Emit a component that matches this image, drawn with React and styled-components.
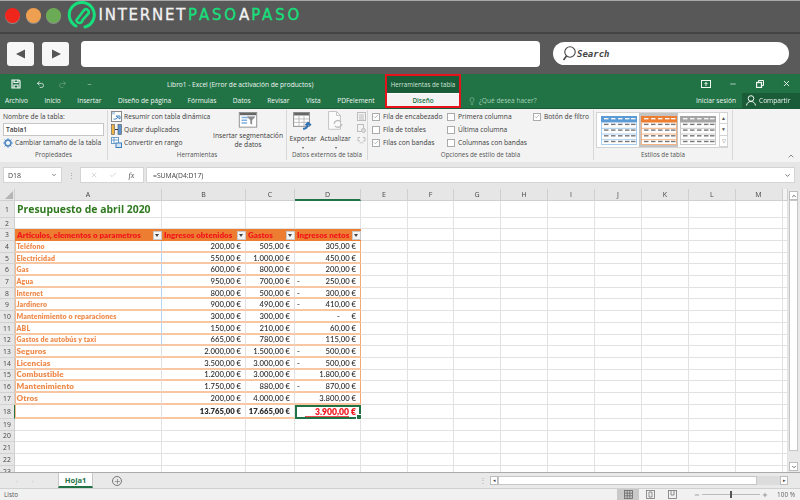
import React from 'react'
import styled, { createGlobalStyle } from 'styled-components'
import { Check, X, Undo2, Redo2, Minus, Plus, Lightbulb, ChevronUp, ChevronDown } from 'lucide-react'

const GlobalStyle = createGlobalStyle`
    html, body { margin: 0; padding: 0; background: #5a5a5a; }
    * { box-sizing: border-box; }
`

const Page = styled.div`
    width: 800px;
    height: 500px;
    overflow: hidden;
    display: flex;
    flex-direction: column;
    font-family: "Open Sans", "Liberation Sans", sans-serif;
    filter: blur(0.3px);
`

/* browser chrome */
const BrowserTop = styled.div`
    height: 34px;
    flex: none;
    display: flex;
    align-items: center;
    background: #585858;
    border-top: 1px solid #a8a8a8;
    border-bottom: 2px solid #444;
    padding: 0 0 3px 5px;
`
const Light = styled.span`
    width: 15px;
    height: 15px;
    border-radius: 50%;
    margin-right: 5.5px;
    background: ${p => p.$color};
    box-shadow: 0 1px 0 #8c8c8c;
`
const Brand = styled.div`
    margin-left: 2px;
    display: flex;
    align-items: center;
    font-family: "DejaVu Sans", sans-serif;
    font-size: 15px;
    letter-spacing: 1.75px;
    color: #f2f2f2;
    -webkit-text-stroke: 0.3px currentColor;
`
const BrandGreen = styled.span`
    color: #16e07c;
    letter-spacing: 2.8px;
    margin-left: 1px;
`
const BrandWhite = styled.span`
    letter-spacing: 1px;
`
const Toolbar = styled.div`
    height: 40px;
    flex: none;
    display: flex;
    align-items: center;
    background: #5a5a5a;
    padding: 0 11px 1px 7px;
`
const NavButton = styled.div`
    width: 27px;
    height: 24px;
    margin-right: 8px;
    background: #f7f7f7;
    border-radius: 3px;
    display: flex;
    align-items: center;
    justify-content: center;
`
const UrlBox = styled.div`
    width: 459px;
    height: 26px;
    margin-left: 4px;
    background: #fff;
    border-radius: 4px;
`
const SearchBox = styled.div`
    width: 236px;
    height: 23px;
    margin-left: auto;
    background: #fff;
    border-radius: 12px;
    display: flex;
    align-items: center;
    gap: 1px;
    padding-left: 9px;
    font-family: "DejaVu Sans Mono", monospace;
    font-style: italic;
    font-weight: bold;
    font-size: 9px;
    color: #444;
`

/* excel title area */
const TitleArea = styled.div`
    height: 34px;
    flex: none;
    display: flex;
    background: #217346;
    color: #f0f6f2;
`
const TitleLeft = styled.div`
    width: 385px;
    flex: none;
    display: flex;
    flex-direction: column;
`
const TitleRight = styled.div`
    flex: 1;
    display: flex;
    flex-direction: column;
`
const TitleRow = styled.div`
    height: 19px;
    display: flex;
    align-items: center;
    padding-top: 1px;
`
const QuickTool = styled.span`
    display: flex;
    align-items: center;
    margin-left: ${p => p.$left}px;
    opacity: ${p => p.$off ? 0.35 : 1};
`
const WindowTitle = styled.span`
    margin-left: 75px;
    font-size: 6.6px;
    white-space: nowrap;
`
const TabRow = styled.div`
    height: 15px;
    display: flex;
    align-items: center;
    font-size: 6.6px;
    gap: 16.5px;
    padding-left: 5px;
    white-space: nowrap;
`
const ContextBox = styled.div`
    width: 76px;
    flex: none;
    border: 2px solid #e8121c;
    border-bottom-width: 2px;
    display: flex;
    flex-direction: column;
    background: #1a5c38;
`
const ContextTitle = styled.div`
    flex: 1;
    display: flex;
    align-items: center;
    justify-content: center;
    font-size: 6.2px;
    white-space: nowrap;
    color: #cfe3d7;
`
const ContextTab = styled.div`
    height: 13px;
    background: #f3f3f3;
    border-top: 1px solid #fff;
    color: #217346;
    font-size: 6.4px;
    font-weight: 600;
    display: flex;
    align-items: center;
    justify-content: center;
`
const WindowControls = styled.div`
    height: 19px;
    display: flex;
    align-items: center;
    justify-content: flex-end;
    color: #f4f8f5;
`
const WindowButton = styled.span`
    width: 27px;
    display: flex;
    justify-content: center;
`
const TellRow = styled.div`
    height: 15px;
    display: flex;
    align-items: center;
    font-size: 6.6px;
    white-space: nowrap;
`
const TellMe = styled.span`
    display: flex;
    align-items: center;
    gap: 3px;
    margin-left: 7px;
    color: #a6d2b6;
`
const SignIn = styled.span`
    margin-left: auto;
    margin-right: 6px;
`
const Share = styled.span`
    width: 58px;
    height: 100%;
    background: #1a5c38;
    display: flex;
    align-items: center;
    gap: 3px;
    padding-left: 4px;
`

/* ribbon */
const Ribbon = styled.div`
    height: 54px;
    flex: none;
    display: flex;
    background: #f3f3f3;
    border-top: 1px solid #1a5c38;
    color: #3c3c3c;
    font-size: 6.7px;
    position: relative;
`
const Group = styled.div`
    width: ${p => p.$width}px;
    flex: none;
    display: flex;
    flex-direction: column;
    border-right: 1px solid #d8d8d8;
    margin: 1px 0 2px;
`
const GroupBody = styled.div`
    flex: 1;
    display: flex;
    padding: ${p => p.$pad || '0 0 0 3px'};
    gap: ${p => p.$gap || 0}px;
    min-height: 0;
`
const GroupLabel = styled.div`
    height: 11px;
    flex: none;
    text-align: center;
    font-size: 6.3px;
    color: #555;
    line-height: 11px;
`
const Stack = styled.div`
    display: flex;
    flex-direction: column;
    width: ${p => p.$width ? p.$width + 'px' : 'auto'};
    flex: ${p => p.$width ? 'none' : '1'};
`
const Line = styled.div`
    height: 13.5px;
    display: flex;
    align-items: center;
    gap: 2px;
    white-space: nowrap;
`
const NameInput = styled.div`
    width: 101px;
    height: 14px;
    border: 1px solid #c6c6c6;
    background: #fff;
    font-weight: 600;
    font-size: 6.6px;
    padding-left: 2px;
    display: flex;
    align-items: center;
`
const BigButton = styled.div`
    width: ${p => p.$width}px;
    flex: none;
    display: flex;
    flex-direction: column;
    align-items: center;
    text-align: center;
    line-height: 9.2px;
    padding-top: ${p => p.$top || 2}px;
`
const BigLabel = styled.div`
    margin-top: 3px;
    white-space: nowrap;
`
const Caret = styled.span`
    width: 0;
    height: 0;
    margin-top: 4px;
    border-left: 1.5px solid transparent;
    border-right: 1.5px solid transparent;
    border-top: 2px solid #555;
`
const SmallIcons = styled.div`
    display: flex;
    flex-direction: column;
    gap: 3px;
    padding-top: 2px;
    margin-left: 2px;
`
const CheckBox = styled.span`
    width: 8px;
    height: 8px;
    flex: none;
    background: #fff;
    border: 1px solid #ababab;
    margin-right: 1px;
    display: flex;
    align-items: center;
    justify-content: center;
    color: #555;
`
const Gallery = styled.div`
    margin: 2px 0 0 2px;
    width: 132px;
    height: 36px;
    background: #fff;
    border: 1px solid #d4d4d4;
    display: flex;
    align-items: center;
    padding-left: 2px;
`
const Thumb = styled.div`
    width: 41px;
    height: 100%;
    display: flex;
    align-items: center;
    justify-content: center;
    background: ${p => p.$active ? '#c4c4c4' : 'transparent'};
`
const GalleryArrows = styled.div`
    margin-left: 1px;
    width: 8px;
    height: 100%;
    display: flex;
    flex-direction: column;
    border-left: 1px solid #d4d4d4;
    color: #555;
`
const GalleryArrow = styled.div`
    flex: 1;
    display: flex;
    align-items: center;
    justify-content: center;
    border-bottom: 1px solid #d4d4d4;
    font-size: 5px;
`
const CollapseButton = styled.span`
    position: absolute;
    right: 5px;
    bottom: 2px;
    color: #555;
    display: flex;
`

/* formula bar */
const FormulaBar = styled.div`
    height: 27px;
    flex: none;
    display: flex;
    align-items: flex-start;
    background: #e6e6e6;
    padding: 5px 5px 0 3px;
    font-size: 7px;
    color: #444;
`
const NameBox = styled.div`
    width: 59px;
    height: 16px;
    background: #fff;
    border: 1px solid #d4d4d4;
    display: flex;
    align-items: center;
    justify-content: space-between;
    padding: 0 4px;
`
const Grip = styled.span`
    width: 18px;
    height: 16px;
    display: flex;
    align-items: center;
    justify-content: center;
    color: #9a9a9a;
    font-size: 7px;
`
const FxBox = styled.div`
    width: 64px;
    height: 16px;
    background: #fff;
    border: 1px solid #d4d4d4;
    display: flex;
    align-items: center;
    justify-content: space-around;
    padding: 0 3px;
    color: #b0b0b0;
`
const FxGlyph = styled.span`
    font-family: "Liberation Serif", serif;
    font-style: italic;
    font-size: 8px;
    color: #555;
`
const FormulaInput = styled.div`
    flex: 1;
    height: 16px;
    margin-left: 2px;
    background: #fff;
    border: 1px solid #d4d4d4;
    display: flex;
    align-items: center;
    justify-content: space-between;
    padding: 0 3px 0 6px;
    font-size: 6.8px;
`

/* sheet */
const SheetArea = styled.div`
    height: 283px;
    flex: none;
    display: flex;
    background: #fff;
    overflow: hidden;
`
const SheetGrid = styled.div`
    width: 788px;
    height: 283px;
    flex: none;
    display: grid;
    grid-template-columns: 15px 147px 84px 49px 66px 47px 46px 47px 47px 47px 47px 47px 46.5px 47px 5.5px;
    grid-template-rows: 12px 17px 11px 12px repeat(14, 11.7px) 14.3px repeat(5, 11.7px);
    font-family: Lato, "Liberation Sans", sans-serif;
`
const ColHead = styled.div`
    display: flex;
    align-items: center;
    justify-content: center;
    font-family: "Open Sans", sans-serif;
    font-size: 7px;
    color: #444;
    background: ${p => p.$empty ? '#f3f3f3' : '#e6e6e6'};
    border-right: 1px solid #cfcfcf;
    border-bottom: ${p => p.$active ? '2px solid #217346' : '1px solid #cfcfcf'};
`
const Corner = styled(ColHead)`
    justify-content: flex-end;
    align-items: flex-end;
    padding: 0 1px 1px 0;
`
const RowHead = styled.div`
    display: flex;
    align-items: center;
    justify-content: center;
    font-family: "Open Sans", sans-serif;
    font-size: 6.8px;
    color: #444;
    background: #e6e6e6;
    border-bottom: 1px solid #d2d2d2;
    border-right: ${p => p.$active ? '1px solid #217346' : '1px solid #cfcfcf'};
`
const Cell = styled.div`
    display: flex;
    align-items: center;
    justify-content: ${p => p.$right ? 'flex-end' : 'flex-start'};
    padding: 0 ${p => p.$right ? '4px' : '2px'} 0 ${p => p.$right ? '2px' : '1.5px'};
    white-space: pre;
    overflow: visible;
    font-size: 7.7px;
    color: #2a2a2a;
    border-right: 1px solid ${p => p.$edge || '#e2e2e2'};
    border-bottom: ${p => p.$rule ? '2px solid #f8c6a3' : '1px solid #e2e2e2'};
    font-weight: ${p => p.$bold ? 800 : 500};
`
const TitleCell = styled(Cell)`
    font-family: "Open Sans", sans-serif;
    font-size: 10.4px;
    font-weight: 700;
    color: #2f7a1f;
    padding-left: 2px;
`
const HeadCell = styled.div`
    display: flex;
    align-items: center;
    justify-content: space-between;
    background: #ed7d31;
    color: #f1161c;
    font-size: 8px;
    font-weight: 800;
    white-space: nowrap;
    padding: 0 0.5px 0 2px;
`
const FilterButton = styled.span`
    width: 9px;
    height: 9px;
    flex: none;
    background: #f4f4f4;
    border: 1px solid #c8c8c8;
    display: flex;
    align-items: center;
    justify-content: center;
    &::after {
        content: '';
        border-left: 2px solid transparent;
        border-right: 2px solid transparent;
        border-top: 3px solid #444;
    }
`
const NameCell = styled(Cell)`
    color: #ef8a4a;
    font-weight: 800;
    font-size: ${p => p.$large ? 8.1 : 7}px;
    box-shadow: inset 1px 0 0 #f6b98f;
    letter-spacing: ${p => p.$large ? 0.1 : 0.12}px;
`
const Dash = styled.span`
    margin-right: auto;
`
const SelectedCell = styled(Cell)`
    position: relative;
    border: 2px solid #217346;
    color: #f1141c;
    font-size: 8.6px;
    font-weight: 800;
    padding-right: 3px;
    &::before {
        content: '';
        position: absolute;
        left: 8px;
        width: 44px;
        bottom: 0;
        height: 1px;
        background: #ef4a50;
    }
    &::after {
        content: '';
        position: absolute;
        right: -3px;
        bottom: -3px;
        width: 4px;
        height: 4px;
        background: #217346;
        border: 1px solid #fff;
    }
`
const VScroll = styled.div`
    flex: 1;
    display: flex;
    flex-direction: column;
    background: #e8e8e8;
    padding: 2px 2px 1px 1px;
`
const ScrollStep = styled.div`
    height: 9px;
    flex: none;
    background: #fff;
    border: 1px solid #bdbdbd;
    color: #444;
    display: flex;
    align-items: center;
    justify-content: center;
    margin-top: ${p => p.$auto ? 'auto' : 0};
`
const VThumb = styled.div`
    height: 251px;
    flex: none;
    background: #fff;
    border: 1px solid #c6c6c6;
`

/* tab bar and status bar */
const TabBar = styled.div`
    height: 17px;
    flex: none;
    display: flex;
    align-items: flex-start;
    background: #e9e9e9;
    border-top: 1px solid #ababab;
    border-bottom: 1px solid #d0d0d0;
    position: relative;
`
const TabNav = styled.span`
    width: 16px;
    margin-top: 5px;
    margin-left: ${p => p.$left || 0}px;
    color: #bdbdbd;
    font-size: 6px;
    line-height: 6px;
    text-align: center;
`
const SheetTab = styled.div`
    width: 35px;
    height: 15px;
    margin-left: 17px;
    background: #fff;
    color: #217346;
    font-size: 7.5px;
    font-weight: 700;
    border-bottom: 2px solid #217346;
    border-left: 1px solid #c8c8c8;
    border-right: 1px solid #c8c8c8;
    display: flex;
    align-items: center;
    justify-content: center;
`
const AddSheet = styled.span`
    width: 10px;
    height: 10px;
    margin: 3px 0 0 19px;
    border: 1px solid #777;
    border-radius: 50%;
    color: #666;
    display: flex;
    align-items: center;
    justify-content: center;
`
const HScroll = styled.div`
    position: absolute;
    left: 490px;
    top: 3px;
    width: 298px;
    height: 9px;
    display: flex;
    background: #dcdcdc;
`
const HStep = styled.span`
    width: 8px;
    flex: none;
    background: #fff;
    border: 1px solid #bdbdbd;
    color: #444;
    font-size: 5px;
    line-height: 7px;
    text-align: center;
    margin-left: ${p => p.$auto ? 'auto' : 0};
`
const HThumb = styled.span`
    width: 259px;
    flex: none;
    background: #fff;
    border: 1px solid #c6c6c6;
`
const HGrip = styled.span`
    position: absolute;
    left: 479px;
    top: 2px;
    color: #aaa;
    font-size: 8px;
    line-height: 10px;
`
const StatusBar = styled.div`
    flex: 1;
    display: flex;
    align-items: center;
    background: #f1f1f1;
    color: #555;
    font-size: 6.4px;
    padding-left: 4px;
`
const StatusRight = styled.div`
    margin-left: auto;
    height: 100%;
    display: flex;
    align-items: center;
    padding-right: 5px;
`
const ViewButton = styled.span`
    width: 22px;
    height: 100%;
    display: flex;
    align-items: center;
    justify-content: center;
    background: ${p => p.$active ? '#c9c9c9' : 'transparent'};
`
const ZoomSlider = styled.div`
    margin-left: 11px;
    display: flex;
    align-items: center;
    color: #555;
`
const ZoomTrack = styled.div`
    width: 58px;
    height: 1px;
    margin: 0 2px;
    background: #bbb;
    display: flex;
    justify-content: center;
    align-items: center;
`
const ZoomThumb = styled.span`
    width: 2px;
    height: 7px;
    flex: none;
    background: #555;
`
const ZoomValue = styled.span`
    margin-left: 9px;
    color: #666;
`

const Logo = () => (
    <svg width="30" height="30" viewBox="0 0 30 30" fill="none" stroke="#16e07c">
        <path d="M9 26A12.5 12.5 0 1 1 18 27" strokeWidth="3" strokeLinecap="round" />
        <path d="M11 21L19 10.5A3 3 0 0 1 23 14.5L17 21A3 3 0 0 1 11 21Z" strokeWidth="2.6" transform="translate(-1.5 -1)" />
    </svg>
)

const Save = () => (
    <svg width="10" height="10" viewBox="0 0 10 10" fill="none" stroke="#f4f8f5" strokeWidth="1.2">
        <path d="M1 1H8L9 2V9H1Z" /><path d="M3 1V3.5H7V1M3 9V6H7V9" />
    </svg>
)

const Triangle = ({ flip }) => (
    <svg width="12" height="12" viewBox="0 0 12 12">
        <path d={flip ? 'M2 1.5L11 6L2 10.5Z' : 'M10 1.5L1 6L10 10.5Z'} fill="#555" />
    </svg>
)

const SearchIcon = () => (
    <svg width="14" height="16" viewBox="0 0 14 16" fill="none" stroke="#444" strokeWidth="1.1">
        <circle cx="8" cy="6" r="5.2" /><path d="M4.5 10L1.5 14" strokeWidth="1.6" />
    </svg>
)

const RibbonDisplay = () => (
    <svg width="10" height="8" viewBox="0 0 10 8" fill="none" stroke="#f4f8f5">
        <rect x="0.5" y="0.5" width="9" height="7" /><path d="M5 6V2.5M3.5 4L5 2.5L6.5 4" />
    </svg>
)

const Restore = () => (
    <svg width="8" height="8" viewBox="0 0 8 8" fill="none" stroke="#f4f8f5">
        <rect x="0.5" y="2.5" width="5" height="5" strokeWidth="1.3" /><path d="M2.5 2.5V0.5H7.5V5.5H5.5" />
    </svg>
)

const Person = () => (
    <svg width="10" height="11" viewBox="0 0 10 11" fill="none" stroke="#f4f8f5">
        <circle cx="5" cy="3.5" r="2.8" /><path d="M0.5 10.5C1 7.5 3 6.5 5 6.5C7 6.5 9 7.5 9.5 10.5" />
    </svg>
)

const Bulb = () => <Lightbulb size={8} strokeWidth={1.5} color="#a6d2b6" />

const ResizeIcon = () => (
    <svg width="10" height="10" viewBox="0 0 10 10">
        <circle cx="5" cy="5" r="3" fill="none" stroke="#4a86c5" strokeWidth="1.4" />
        <path d="M5 0V10M0 5H10M1.5 1.5L8.5 8.5M8.5 1.5L1.5 8.5" stroke="#4a86c5" strokeWidth="0.8" />
        <circle cx="5" cy="5" r="2" fill="#f3f3f3" />
    </svg>
)

const PivotIcon = () => (
    <svg width="11" height="11" viewBox="0 0 11 11" fill="none">
        <rect x="0.5" y="0.5" width="10" height="10" fill="#fff" stroke="#8a8a8a" />
        <rect x="1" y="1" width="3" height="2.5" fill="#b8cfe6" />
        <path d="M5 5H9V8L5 5ZM2.5 8C4 8.5 6 8 7 6" stroke="#3d7fbd" />
    </svg>
)

const DedupeIcon = () => (
    <svg width="11" height="11" viewBox="0 0 11 11">
        <rect x="0.5" y="0.5" width="3" height="10" fill="#f2b544" stroke="#555" strokeWidth="0.6" />
        <rect x="7" y="0.5" width="3.5" height="10" fill="#5a93cf" stroke="#555" strokeWidth="0.6" />
        <path d="M4 5.5H7" stroke="#333" />
    </svg>
)

const ConvertIcon = () => (
    <svg width="11" height="11" viewBox="0 0 11 11" fill="none" stroke="#6d9cc9">
        <rect x="0.5" y="0.5" width="7" height="6" fill="#fff" />
        <path d="M0.5 3H7.5M3 0.5V6.5" />
        <rect x="5" y="6" width="5.5" height="4.5" fill="#d3e3f2" stroke="#3d7fbd" />
    </svg>
)

const SlicerIcon = () => (
    <svg width="20" height="17" viewBox="0 0 20 17">
        <rect x="0.5" y="0.5" width="19" height="16" fill="#fff" stroke="#8c8c8c" />
        <rect x="1" y="1" width="18" height="2.5" fill="#666" />
        <path d="M3 6H17M3 9H9M3 12H9" stroke="#7fb0dd" strokeWidth="1.6" />
        <path d="M9 5H18L14.5 9V14L12.5 12.5V9Z" fill="#8c8c8c" />
    </svg>
)

const ExportIcon = () => (
    <svg width="20" height="19" viewBox="0 0 20 19" fill="none">
        <rect x="0.5" y="0.5" width="16" height="14" fill="#fff" stroke="#8c8c8c" />
        <rect x="1" y="1" width="15" height="2.5" fill="#666" />
        <path d="M1 7H16M1 10.5H16M6 4V14M11 4V14" stroke="#bcbcbc" />
        <path d="M10 17C13 17 15 15 15 12.5M12.5 13.5L15 11L18 13.5" stroke="#2f73b5" strokeWidth="2" />
    </svg>
)

const RefreshIcon = () => (
    <svg width="18" height="20" viewBox="0 0 18 20" fill="none" stroke="#c4c4c4">
        <path d="M1.5 0.5H9.5L13.5 4.5V18.5H1.5Z" fill="#fbfbfb" />
        <path d="M9.5 0.5V4.5H13.5" />
        <path d="M7 13A4 4 0 0 1 14 11M15 13A4 4 0 0 1 8 15" strokeWidth="1.4" stroke="#bdbdbd" />
    </svg>
)

const GrayIcon = ({ kind }) => (
    <svg width="9" height="9" viewBox="0 0 9 9" fill="none" stroke="#bdbdbd">
        {kind === 'list' && <><rect x="0.5" y="0.5" width="8" height="8" /><path d="M2 3H7M2 5H7M2 7H7" /></>}
        {kind === 'gear' && <><rect x="0.5" y="0.5" width="6" height="7" /><circle cx="6.5" cy="6.5" r="2" fill="#ddd" /></>}
        {kind === 'link' && <path d="M3 1.5H1V5H3M6 1.5H8V5H6M3 7.5L4.5 6L6 7.5" />}
    </svg>
)

const TableThumb = ({ color, tint }) => (
    <svg width="36" height="29" viewBox="0 0 36 29">
        <rect x="0.5" y="0.5" width="35" height="28" fill="#fff" stroke={tint} />
        <rect x="0" y="0" width="36" height="6" fill={color} />
        {[0, 1, 2, 3, 4].map(r => (
            <g key={r}>
                {[3, 10, 17, 24, 30].map(x => (
                    <rect key={x} x={x} y={2 + r * 5.7} width="4.5" height="1.4" fill={r === 0 ? '#f3f3f3' : '#777'} />
                ))}
                {r > 0 && <rect x="0" y={r * 5.7 + 0.4} width="36" height="1" fill={tint} />}
            </g>
        ))}
    </svg>
)

const SheetIcon = ({ active, kind }) => (
    <svg width="9" height="9" viewBox="0 0 9 9" fill="none" stroke={active ? '#666' : '#777'} strokeWidth="0.8">
        <rect x="0.5" y="0.5" width="8" height="8" />
        {kind === 'grid' && <path d="M0.5 3.2H8.5M0.5 5.8H8.5M3.2 0.5V8.5M5.8 0.5V8.5" />}
        {kind === 'page' && <path d="M3 2H6V7H3Z" />}
        {kind === 'break' && <path d="M3 0.5V5H6V0.5" />}
    </svg>
)

const Checkbox = ({ checked, label }) => (
    <Line>
        <CheckBox>{checked && <Check size={7} strokeWidth={1.5} />}</CheckBox>
        <span>{label}</span>
    </Line>
)

const columns = ['A', 'B', 'C', 'D', 'E', 'F', 'G', 'H', 'I', 'J', 'K', 'L', 'M', '']

const items = [
    ['Teléfono', '200,00 €', '505,00 €', '305,00 €'],
    ['Electricidad', '550,00 €', '1.000,00 €', '450,00 €'],
    ['Gas', '600,00 €', '800,00 €', '200,00 €'],
    ['Agua', '950,00 €', '700,00 €', '250,00 €', true],
    ['Internet', '800,00 €', '500,00 €', '300,00 €', true],
    ['Jardinero', '900,00 €', '490,00 €', '410,00 €', true],
    ['Mantenimiento o reparaciones', '300,00 €', '300,00 €', '-      €'],
    ['ABL', '150,00 €', '210,00 €', '60,00 €'],
    ['Gastos de autobús y taxi', '665,00 €', '780,00 €', '115,00 €'],
    ['Seguros', '2.000,00 €', '1.500,00 €', '500,00 €', true],
    ['Licencias', '3.500,00 €', '3.000,00 €', '500,00 €', true],
    ['Combustible', '1.200,00 €', '3.000,00 €', '1.800,00 €'],
    ['Mantenimiento', '1.750,00 €', '880,00 €', '870,00 €', true],
    ['Otros', '200,00 €', '4.000,00 €', '3.800,00 €'],
]

const headers = ['Articulos, elementos o parametros', 'Ingresos obtenidos', 'Gastos', 'Ingresos netos']
const emptyCols = ['E', 'F', 'G', 'H', 'I', 'J', 'K', 'L', 'M', 'N']

const Blanks = () => emptyCols.map(c => <Cell key={c} />)

const Sheet = () => (
    <SheetGrid>
        <Corner>
            <svg width="8" height="8" viewBox="0 0 8 8"><path d="M8 0V8H0Z" fill="#b4b4b4" /></svg>
        </Corner>
        {columns.map((c, i) => <ColHead key={i} $active={c === 'D'} $empty={c === ''}>{c}</ColHead>)}

        <RowHead>1</RowHead>
        <TitleCell>Presupuesto de abril 2020</TitleCell>
        <Cell /><Cell /><Cell /><Blanks />

        <RowHead>2</RowHead>
        <Cell /><Cell /><Cell /><Cell /><Blanks />

        <RowHead>3</RowHead>
        {headers.map(h => <HeadCell key={h}>{h}<FilterButton /></HeadCell>)}
        <Blanks />

        {items.map(([name, income, cost, net, negative], i) => (
            <React.Fragment key={i}>
                <RowHead>{i + 4}</RowHead>
                <NameCell $rule $large={i > 8} $edge={i < 9 ? '#b9d5ef' : undefined}>{name}</NameCell>
                <Cell $rule $right>{income}</Cell>
                <Cell $rule $right>{cost}</Cell>
                <Cell $rule $right $edge="#f2a873">
                    {negative && <Dash>-</Dash>}{net}
                </Cell>
                <Blanks />
            </React.Fragment>
        ))}

        <RowHead $active>18</RowHead>
        <NameCell $rule />
        <Cell $rule $right $bold>13.765,00 €</Cell>
        <Cell $rule $right $bold>17.665,00 €</Cell>
        <SelectedCell $right>3.900,00 €</SelectedCell>
        <Blanks />

        {[19, 20, 21, 22, 23].map(n => (
            <React.Fragment key={n}>
                <RowHead>{n}</RowHead>
                <Cell /><Cell /><Cell /><Cell /><Blanks />
            </React.Fragment>
        ))}
    </SheetGrid>
)

function App() {
    return (
        <Page>
            <GlobalStyle />

            <BrowserTop>
                <Light $color="#f0251c" />
                <Light $color="#ee9f50" />
                <Light $color="#6cab55" />
                <Logo />
                <Brand>
                    INTERNET<BrandGreen>PASO</BrandGreen><BrandWhite>A</BrandWhite><BrandGreen>PASO</BrandGreen>
                </Brand>
            </BrowserTop>

            <Toolbar>
                <NavButton><Triangle /></NavButton>
                <NavButton><Triangle flip /></NavButton>
                <UrlBox />
                <SearchBox><SearchIcon />Search</SearchBox>
            </Toolbar>

            <TitleArea>
                <TitleLeft>
                    <TitleRow>
                        <QuickTool $left={11}><Save /></QuickTool>
                        <QuickTool $left={15}><Undo2 size={9} strokeWidth={2} /></QuickTool>
                        <QuickTool $left={13} $off><Redo2 size={9} strokeWidth={2} /></QuickTool>
                        <QuickTool $left={20}><Minus size={5} strokeWidth={2} /></QuickTool>
                        <WindowTitle>Libro1 - Excel (Error de activación de productos)</WindowTitle>
                    </TitleRow>
                    <TabRow>
                        <span>Archivo</span><span>Inicio</span><span>Insertar</span><span>Diseño de página</span>
                        <span>Fórmulas</span><span>Datos</span><span>Revisar</span><span>Vista</span><span>PDFelement</span>
                    </TabRow>
                </TitleLeft>
                <ContextBox>
                    <ContextTitle>Herramientas de tabla</ContextTitle>
                    <ContextTab>Diseño</ContextTab>
                </ContextBox>
                <TitleRight>
                    <WindowControls>
                        <WindowButton><RibbonDisplay /></WindowButton>
                        <WindowButton><Minus size={8} strokeWidth={2} /></WindowButton>
                        <WindowButton><Restore /></WindowButton>
                        <WindowButton><X size={9} strokeWidth={2.4} /></WindowButton>
                    </WindowControls>
                    <TellRow>
                        <TellMe><Bulb />¿Qué desea hacer?</TellMe>
                        <SignIn>Iniciar sesión</SignIn>
                        <Share><Person />Compartir</Share>
                    </TellRow>
                </TitleRight>
            </TitleArea>

            <Ribbon>
                <Group $width={108}>
                    <GroupBody>
                        <Stack>
                            <Line>Nombre de la tabla:</Line>
                            <NameInput>Tabla1</NameInput>
                            <Line><ResizeIcon /><span>Cambiar tamaño de la tabla</span></Line>
                        </Stack>
                    </GroupBody>
                    <GroupLabel>Propiedades</GroupLabel>
                </Group>
                <Group $width={179}>
                    <GroupBody>
                        <Stack $width={103}>
                            <Line><PivotIcon />Resumir con tabla dinámica</Line>
                            <Line><DedupeIcon />Quitar duplicados</Line>
                            <Line><ConvertIcon />Convertir en rango</Line>
                        </Stack>
                        <BigButton $width={68}>
                            <SlicerIcon />
                            <BigLabel>Insertar segmentación<br />de datos</BigLabel>
                        </BigButton>
                    </GroupBody>
                    <GroupLabel>Herramientas</GroupLabel>
                </Group>
                <Group $width={81}>
                    <GroupBody $pad="0 0 0 3px" $gap={4}>
                        <BigButton $width={26}>
                            <ExportIcon />
                            <BigLabel>Exportar</BigLabel>
                            <Caret />
                        </BigButton>
                        <BigButton $width={31} $top={1}>
                            <RefreshIcon />
                            <BigLabel>Actualizar</BigLabel>
                            <Caret />
                        </BigButton>
                        <SmallIcons>
                            <GrayIcon kind="list" />
                            <GrayIcon kind="gear" />
                            <GrayIcon kind="link" />
                        </SmallIcons>
                    </GroupBody>
                    <GroupLabel>Datos externos de tabla</GroupLabel>
                </Group>
                <Group $width={226}>
                    <GroupBody $pad="0 0 0 4px">
                        <Stack $width={75}>
                            <Checkbox checked label="Fila de encabezado" />
                            <Checkbox label="Fila de totales" />
                            <Checkbox checked label="Filas con bandas" />
                        </Stack>
                        <Stack $width={86}>
                            <Checkbox label="Primera columna" />
                            <Checkbox label="Última columna" />
                            <Checkbox label="Columnas con bandas" />
                        </Stack>
                        <Stack $width={55}>
                            <Checkbox checked label="Botón de filtro" />
                        </Stack>
                    </GroupBody>
                    <GroupLabel>Opciones de estilo de tabla</GroupLabel>
                </Group>
                <Group $width={139}>
                    <GroupBody $pad="0">
                        <Gallery>
                            <Thumb><TableThumb color="#5b9bd5" tint="#a9cdec" /></Thumb>
                            <Thumb $active><TableThumb color="#ed7d31" tint="#f4b183" /></Thumb>
                            <Thumb><TableThumb color="#a5a5a5" tint="#c9c9c9" /></Thumb>
                            <GalleryArrows>
                                <GalleryArrow>▲</GalleryArrow>
                                <GalleryArrow>▼</GalleryArrow>
                                <GalleryArrow>▽</GalleryArrow>
                            </GalleryArrows>
                        </Gallery>
                    </GroupBody>
                    <GroupLabel>Estilos de tabla</GroupLabel>
                </Group>
                <CollapseButton><ChevronUp size={8} strokeWidth={2} /></CollapseButton>
            </Ribbon>

            <FormulaBar>
                <NameBox>D18<ChevronDown size={6} strokeWidth={2.5} /></NameBox>
                <Grip>⋮</Grip>
                <FxBox>
                    <X size={8} strokeWidth={1.4} />
                    <Check size={8} strokeWidth={1.4} />
                    <FxGlyph>fx</FxGlyph>
                </FxBox>
                <FormulaInput>=SUMA(D4:D17)<ChevronDown size={7} strokeWidth={2.5} /></FormulaInput>
            </FormulaBar>

            <SheetArea>
                <Sheet />
                <VScroll>
                    <ScrollStep><ChevronUp size={6} strokeWidth={3} /></ScrollStep>
                    <VThumb />
                    <ScrollStep $auto><ChevronDown size={6} strokeWidth={3} /></ScrollStep>
                </VScroll>
            </SheetArea>

            <TabBar>
                <TabNav $left={9}>‹</TabNav>
                <TabNav>›</TabNav>
                <SheetTab>Hoja1</SheetTab>
                <AddSheet><Plus size={7} strokeWidth={2} /></AddSheet>
                <HGrip>⋮</HGrip>
                <HScroll>
                    <HStep>◂</HStep>
                    <HThumb />
                    <HStep $auto>▸</HStep>
                </HScroll>
            </TabBar>

            <StatusBar>
                Listo
                <StatusRight>
                    <ViewButton $active><SheetIcon active kind="grid" /></ViewButton>
                    <ViewButton><SheetIcon kind="page" /></ViewButton>
                    <ViewButton><SheetIcon kind="break" /></ViewButton>
                    <ZoomSlider>
                        <Minus size={6} strokeWidth={2} />
                        <ZoomTrack><ZoomThumb /></ZoomTrack>
                        <Plus size={6} strokeWidth={2} />
                    </ZoomSlider>
                    <ZoomValue>100 %</ZoomValue>
                </StatusRight>
            </StatusBar>
        </Page>
    )
}

export default App
